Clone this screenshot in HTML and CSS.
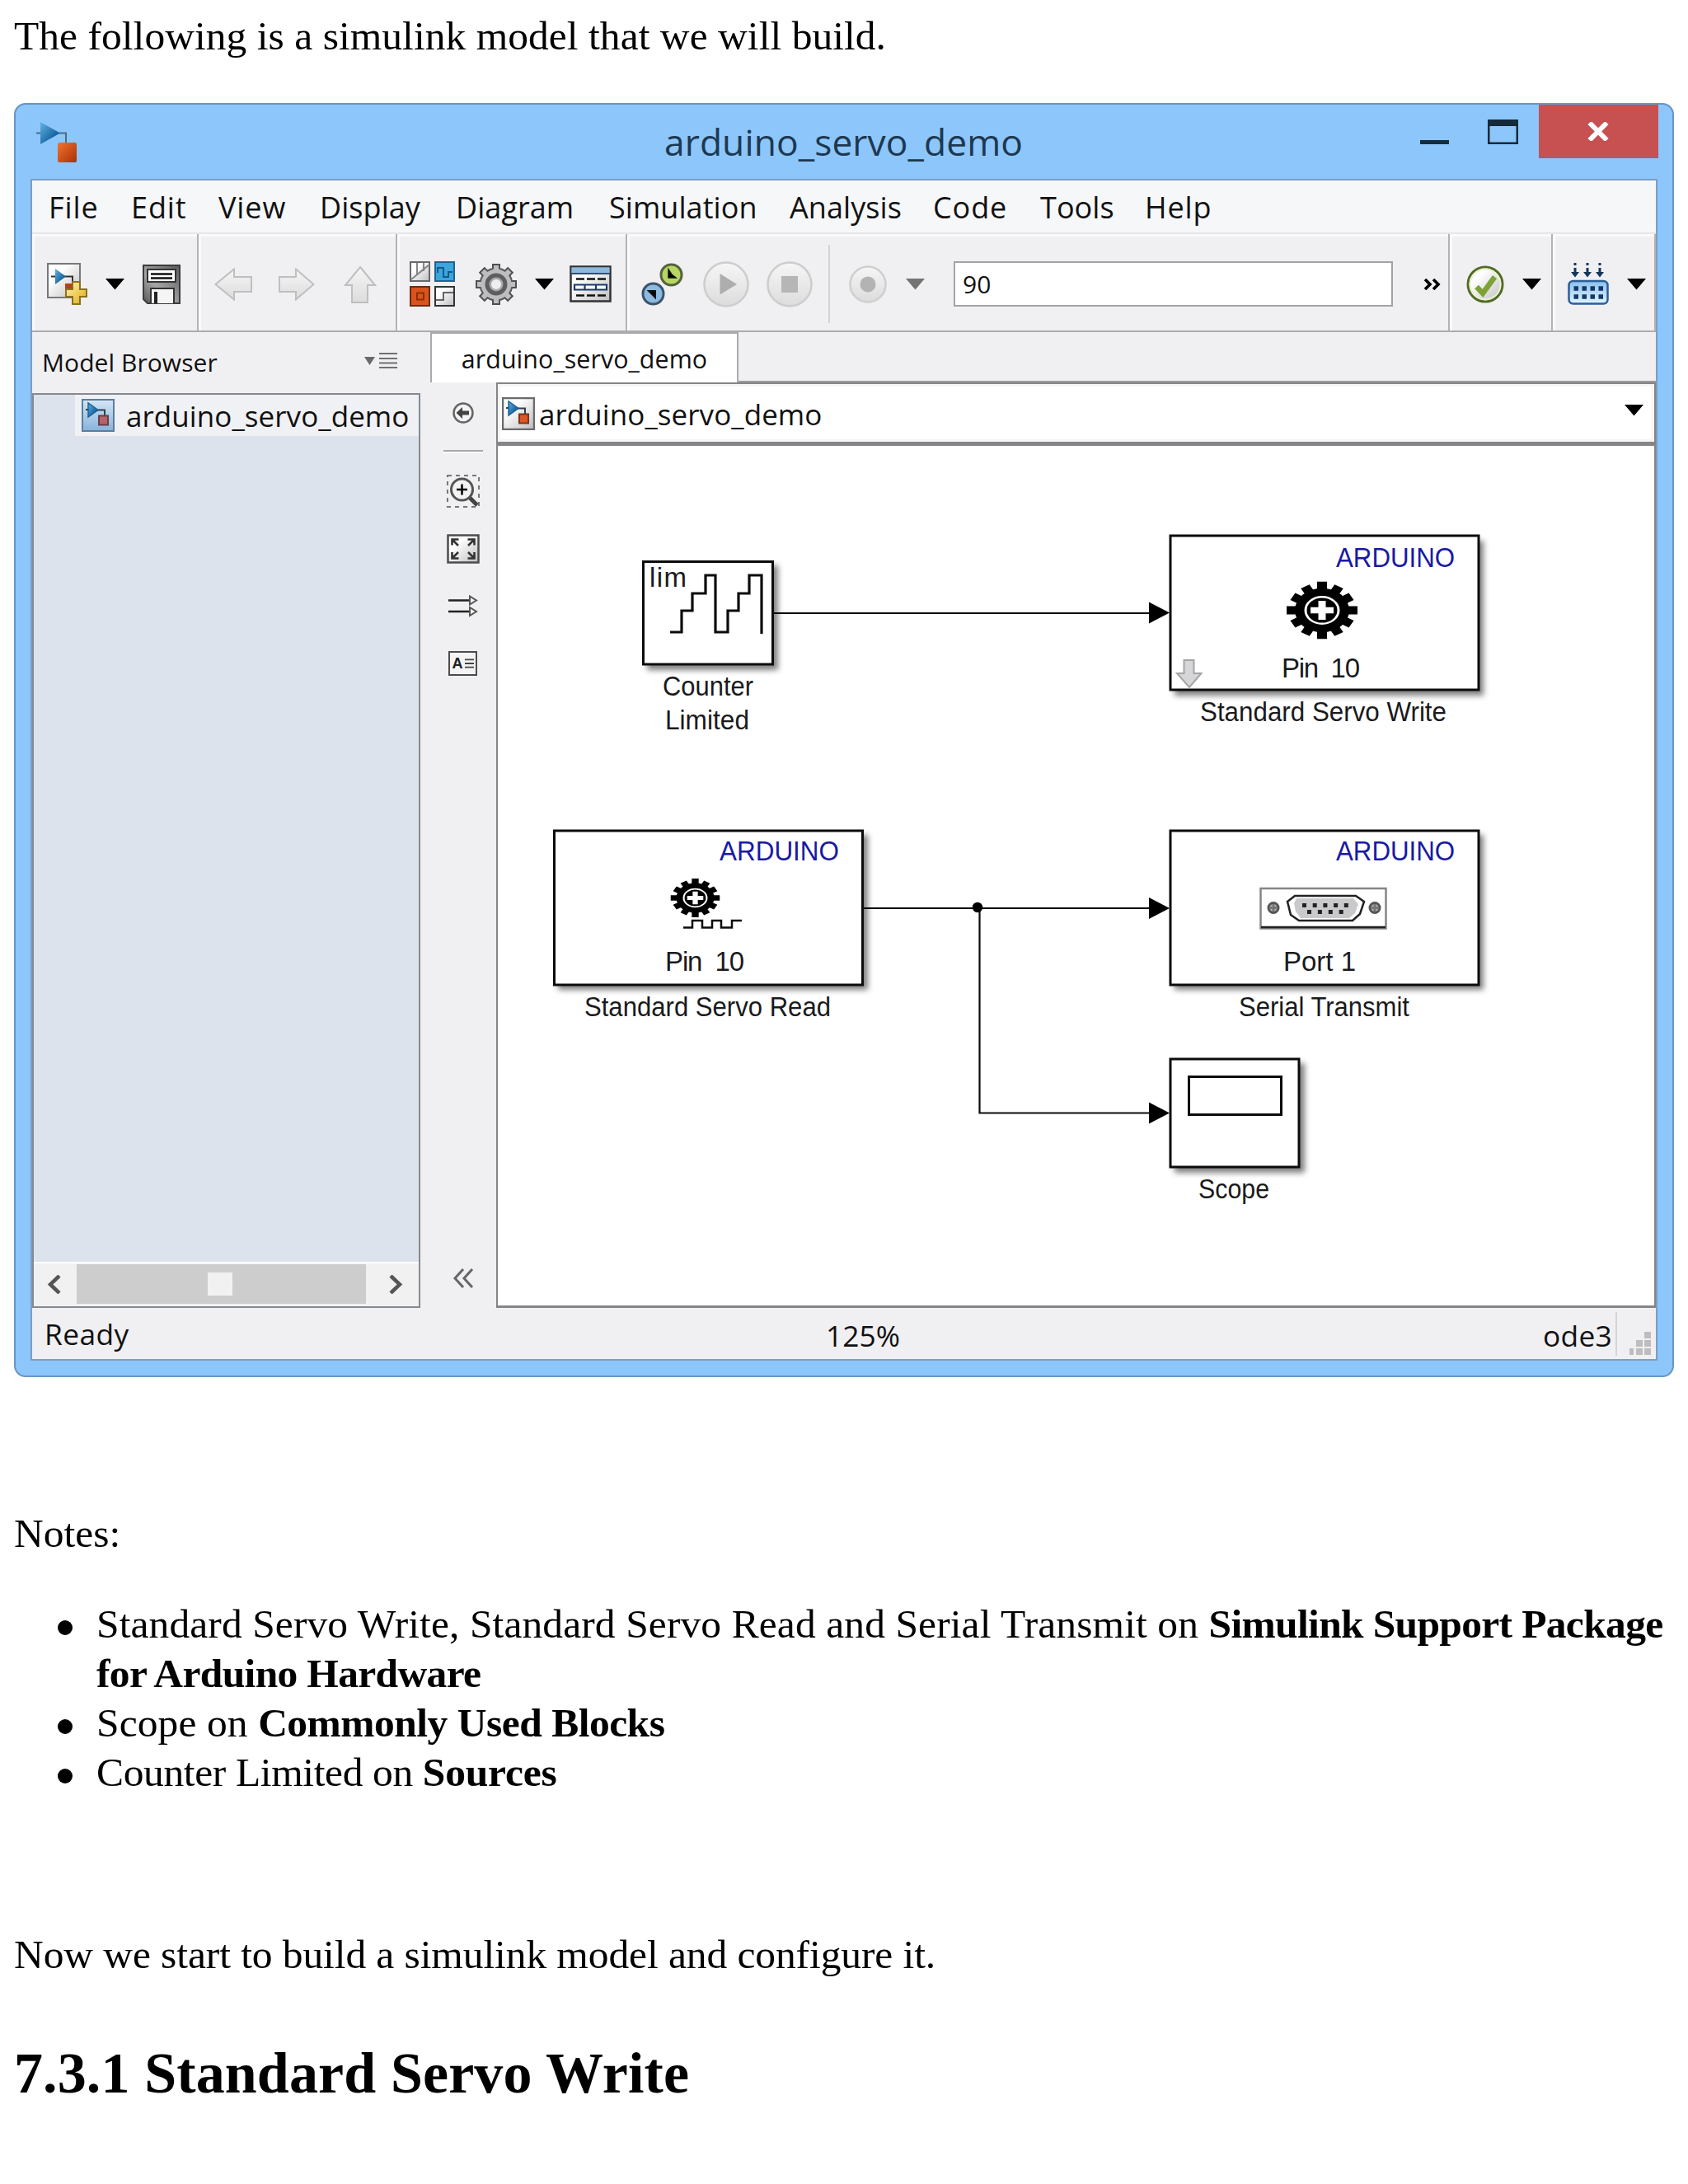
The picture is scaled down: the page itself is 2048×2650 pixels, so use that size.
FILE: index.html
```html
<!DOCTYPE html>
<html lang="en">
<head>
<meta charset="utf-8">
<title>7.3 Servo</title>
<link rel="stylesheet" href="styles.css">
</head>
<body>
<svg class="defs" width="0" height="0">
  <defs>
    <linearGradient id="blue" x1="0" y1="0" x2="1" y2="1"><stop offset="0" stop-color="#62b2e4"/><stop offset=".7" stop-color="#14639f"/></linearGradient>
    <linearGradient id="orange" x1="0" y1="0" x2="1" y2="1"><stop offset="0" stop-color="#f4732e"/><stop offset="1" stop-color="#a93008"/></linearGradient>
    <linearGradient id="paper" x1="0" y1="0" x2="1" y2="1"><stop offset=".3" stop-color="#fff"/><stop offset="1" stop-color="#bdbdc0"/></linearGradient>
    <linearGradient id="paperblue" x1="0" y1="0" x2="0" y2="1"><stop offset="0" stop-color="#d5e6f5"/><stop offset="1" stop-color="#86b3db"/></linearGradient>
    <linearGradient id="gold" x1="0" y1="0" x2="1" y2="1"><stop offset="0" stop-color="#fff6b0"/><stop offset="1" stop-color="#e0aa10"/></linearGradient>
    <linearGradient id="steel" x1="1" y1="0" x2="0" y2="1"><stop offset="0" stop-color="#5a5a5a"/><stop offset=".6" stop-color="#a6a6a6"/><stop offset="1" stop-color="#555"/></linearGradient>
    <linearGradient id="pale" x1="0" y1="0" x2="0" y2="1"><stop offset="0" stop-color="#f6f6f6"/><stop offset="1" stop-color="#dcdcdd"/></linearGradient>
    <linearGradient id="sky" x1="0" y1="0" x2="0" y2="1"><stop offset="0" stop-color="#8cc0ee"/><stop offset="1" stop-color="#e3f3ff"/></linearGradient>
    <filter id="shadow" x="-10%" y="-10%" width="125%" height="130%"><feGaussianBlur stdDeviation="3.5"/></filter>
    <symbol id="caret" viewBox="0 0 23 14"><path d="M0 0H23L11.500 13.500Z"/></symbol>
    <symbol id="model" viewBox="0 0 40 40"><path d="M5 13h4M19 13.500h9V20" fill="none" stroke="#333f4a" stroke-width="2"/><path d="M8 5V22L20 13.500Z" fill="url(#blue)" stroke="#1d6296" stroke-width="1.500"/></symbol>
  </defs>
</svg>

<p class="intro">The following is a simulink model that we will build.</p>

<div class="window">
  <header class="titlebar">
    <svg class="app-icon" viewBox="0 0 49 49"><path d="M0 13.500H6M28 13.500h8V25" fill="none" stroke="#4b6b86" stroke-width="2"/><path d="M5 0V27L29 13.500Z" fill="url(#blue)"/><rect x="26" y="25" width="23" height="24" rx="2" fill="url(#orange)"/></svg>
    <span class="title">arduino_servo_demo</span>
    <svg class="win-min" viewBox="0 0 35 5"><path d="M0 0H35V5H0Z" fill="#152c40"/></svg>
    <svg class="win-max" viewBox="0 0 37 30"><path d="M0 0H37V30H0ZM2.500 8V27.500H34.500V8Z" fill="#14293a" fill-rule="evenodd"/></svg>
    <div class="win-close"><svg viewBox="0 0 28 23"><path d="M3.500 1 24.500 22M24.500 1 3.500 22" stroke="#fff" stroke-width="6"/></svg></div>
  </header>

  <div class="client">
    <nav class="menu"><span class="wide">File</span><span class="wide">Edit</span><span class="wide">View</span><span>Display</span><span>Diagram</span><span>Simulation</span><span>Analysis</span><span class="wide">Code</span><span>Tools</span><span class="wide">Help</span></nav>

    <div class="toolbar">
      <div class="group g-file">
        <svg class="t-new" viewBox="0 0 49 51"><rect x="1" y="1" width="39" height="41" fill="url(#paper)" stroke="#77787b" stroke-width="2"/><path d="M5 16.500h6M20 16.500h11V24" fill="none" stroke="#333" stroke-width="2"/><path d="M10 7V26L23 16.500Z" fill="url(#blue)"/><rect x="22" y="25" width="10" height="8" fill="#b4401b"/><path d="M31 23h9v9h8v9h-8v9h-9v-9h-8v-9h8Z" fill="url(#gold)" stroke="#8b701d" stroke-width="2"/></svg>
        <svg class="caret"><use href="#caret"/></svg>
        <svg class="t-save" viewBox="0 0 46 48"><path d="M1 1H45V47H6L1 42Z" fill="url(#steel)" stroke="#3b3b3b" stroke-width="2"/><rect x="6" y="6" width="34" height="15" fill="#fff" stroke="#333" stroke-width="2"/><path d="M10 11.500h26M10 16.500h26" stroke="#111" stroke-width="2.500"/><path d="M10 47V29H38V47" fill="#f5f5f5" stroke="#333" stroke-width="2"/><path d="M16 33V47" stroke="#222" stroke-width="4"/></svg>
      </div>
      <div class="group g-nav">
        <svg class="t-back" viewBox="0 0 46 40"><path d="M1.500 20 24 1.500V11H45V29H24V38.500Z" fill="url(#pale)" stroke="#bfbfc1" stroke-width="2"/></svg>
        <svg class="t-fwd" viewBox="0 0 44 40"><path d="M42.500 20 21 1.500V11H1V29H21V38.500Z" fill="url(#pale)" stroke="#bfbfc1" stroke-width="2"/></svg>
        <svg class="t-up" viewBox="0 0 40 46"><path d="M20 2 38 24H29V45H10V24H2Z" fill="url(#pale)" stroke="#bfbfc1" stroke-width="2"/></svg>
      </div>
      <div class="group g-lib">
        <svg class="t-lib" viewBox="0 0 55 55"><g stroke-width="2"><rect x="1" y="1" width="23" height="23" fill="url(#paper)" stroke="#68696b"/><path d="M9 2V17M17 2V12M2 22 24 4" fill="none" stroke="#85868a"/><rect x="31" y="1" width="23" height="23" fill="#3ba5dc" stroke="#1f6390"/><path d="M34 14V8H41V19H47V13H52" fill="none" stroke="#135a86"/><rect x="1" y="31" width="23" height="23" fill="#d9541e" stroke="#6d2c12"/><rect x="9" y="38.500" width="8" height="8" fill="none" stroke="#8d2d08"/><rect x="31" y="31" width="23" height="23" fill="url(#paper)" stroke="#333"/><path d="M32 47H41V38H53" fill="none" stroke="#666"/></g></svg>
        <svg class="t-gear" viewBox="-25 -25 50 50"><g stroke="#4f4f50" stroke-width="10"><path d="M0-25V25M-25 0H25"/><path d="M0-25V25M-25 0H25" transform="rotate(45)"/></g><circle r="20.500" fill="#58585a"/><g stroke="#bebec0" stroke-width="6"><path d="M0-23V23M-23 0H23"/><path d="M0-23V23M-23 0H23" transform="rotate(45)"/></g><circle r="18.500" fill="#bdbdbf"/><circle r="11" fill="#aaa" stroke="#5e5e60" stroke-width="5"/><circle r="6" fill="#eee"/></svg>
        <svg class="caret"><use href="#caret"/></svg>
        <svg class="t-table" viewBox="0 0 51 45"><rect x="1.500" y="1.500" width="48" height="42" fill="url(#paper)" stroke="#333" stroke-width="2.500"/><rect x="2.500" y="2.500" width="46" height="7" fill="#8db9de"/><path d="M2 10H49" stroke="#35516d" stroke-width="2"/><path d="M8 16.500H44M8 36.500H44" stroke="#111" stroke-width="2.500" stroke-dasharray="10 3"/><path d="M6 23.500H45V29.500H6ZM18.500 23V30M32 23V30" fill="#fff" stroke="#1c3b6b" stroke-width="2.200"/></svg>
      </div>
      <div class="group g-sim">
        <svg class="t-clocks" viewBox="0 0 51 52"><circle cx="36.500" cy="14.500" r="12.500" fill="#b7d765" stroke="#55633a" stroke-width="3"/><path d="M33 8V18H42L37 14Z" stroke="#111" stroke-width="1.500"/><circle cx="14.500" cy="37.500" r="12.500" fill="#8dbbe0" stroke="#3c536b" stroke-width="3"/><path d="M9 34H17V42Z" stroke="#111" stroke-width="2"/></svg>
        <svg class="t-play" viewBox="0 0 56 56"><circle cx="28" cy="28" r="26.500" fill="url(#pale)" stroke="#cdcdce" stroke-width="2.500"/><path d="M20.500 15V40.500L41 28Z" fill="#adadae"/></svg>
        <svg class="t-stop" viewBox="0 0 56 56"><circle cx="28" cy="28" r="26.500" fill="url(#pale)" stroke="#cdcdce" stroke-width="2.500"/><rect x="18" y="18" width="20" height="20" fill="#b6b6b7"/></svg>
        <i class="rule"></i>
        <svg class="t-rec" viewBox="0 0 46 46"><circle cx="23" cy="23" r="21.500" fill="url(#pale)" stroke="#cfcfd0" stroke-width="2.500"/><circle cx="23" cy="23" r="9.500" fill="#b3b3b4"/></svg>
        <svg class="caret dim"><use href="#caret"/></svg>
        <div class="stop-time">90</div>
        <svg class="t-more" viewBox="0 0 22 14"><path d="M2 1 8 7 2 13M12 1 18 7 12 13" fill="none" stroke="#000" stroke-width="3.600"/></svg>
      </div>
      <div class="group g-check">
        <svg class="t-check" viewBox="0 0 46 46"><circle cx="23" cy="23" r="21" fill="url(#paper)" stroke="#526b26" stroke-width="3"/><circle cx="23" cy="23" r="18.500" fill="none" stroke="#e7f2cd" stroke-width="2"/><path d="M12.500 26 20 34 34.500 14" fill="none" stroke="#7fa236" stroke-width="6.500"/></svg>
        <svg class="caret"><use href="#caret"/></svg>
      </div>
      <div class="group g-build">
        <svg class="t-build" viewBox="0 0 50 51"><g stroke="#16365a" fill="#16365a"><path d="M9 0V3M24 0V3M39 0V3M9 6V13M24 6V13M39 6V13" stroke-width="3"/><path d="M4 11H14L9 17.500ZM19 11H29L24 17.500ZM34 11H44L39 17.500Z" stroke="none"/></g><rect x="1.500" y="22" width="47" height="27.500" rx="5" fill="url(#sky)" stroke="#2b5f96" stroke-width="2.500"/><path d="M7.500 31H44M7.500 41H44" stroke="#123a66" stroke-width="5.500" stroke-dasharray="5.500 4.500"/></svg>
        <svg class="caret"><use href="#caret"/></svg>
      </div>
    </div>

    <div class="main">
      <aside class="browser">
        <div class="browser-head"><span>Model Browser</span>
          <svg viewBox="0 0 40 19"><path d="M0 5H13L6.500 15Z" fill="#6a6a6a"/><path d="M18 1H40M18 7H40M18 12.500H40M18 18H40" stroke="#707070" stroke-width="2"/></svg>
        </div>
        <div class="tree">
          <div class="tree-row"><svg viewBox="0 0 40 40"><rect x="1" y="1" width="38" height="38" fill="url(#paperblue)" stroke="#5d7d9e" stroke-width="2"/><use href="#model"/><rect x="21" y="20.500" width="11" height="11" fill="#b5636a" stroke="#6d3c49" stroke-width="2"/></svg><span>arduino_servo_demo</span></div>
          <div class="hscroll">
            <svg class="h-left" viewBox="0 0 19 23"><path d="M16 1 5 11.500 16 22" fill="none" stroke="#555" stroke-width="4.500"/></svg>
            <div class="track"><i></i></div>
            <svg class="h-right" viewBox="0 0 19 23"><path d="M3 1 14 11.500 3 22" fill="none" stroke="#555" stroke-width="4.500"/></svg>
          </div>
        </div>
      </aside>

      <section class="work">
        <div class="tabs"><div class="tab">arduino_servo_demo</div><div class="tab-rest"></div></div>
        <div class="edit-row">
          <div class="palette">
            <svg class="p-hide" viewBox="0 0 26 26"><circle cx="13" cy="13" r="11.500" fill="#f4f4f4" stroke="#666" stroke-width="2.500"/><path d="M4.500 13 12 6V10.500H20V15.500H12V20Z" fill="#444"/></svg>
            <i class="p-rule"></i>
            <svg class="p-zoom" viewBox="0 0 40 40"><rect x="1" y="1" width="38" height="38" fill="none" stroke="#777" stroke-width="2" stroke-dasharray="5 5"/><path d="M27 27 37 37" stroke="#444" stroke-width="5"/><circle cx="18.500" cy="18" r="13" fill="#f3f3f4" stroke="#555" stroke-width="3"/><path d="M12 18H25M18.500 11.500V24.500" stroke="#000" stroke-width="2.500"/></svg>
            <svg class="p-fit" viewBox="0 0 40 36"><rect x="1.500" y="1.500" width="37" height="33" fill="url(#paper)" stroke="#4c4c4e" stroke-width="2.500"/><path d="M6.500 13.500V6.500H14.500M7 7 14 14M25.500 6.500H33.500V13.500M33 7 26 14M6.500 22V29.500H14.500M7 29 14 22M33.500 22V29.500H25.500M33 29 26 22" fill="none" stroke="#333" stroke-width="2.600"/></svg>
            <svg class="p-sig" viewBox="0 0 36 27"><path d="M0 6.500H27M0 20H27" stroke="#222" stroke-width="2.500"/><path d="M26 1.500V11.500L34 6.500ZM26 15V25L34 20Z" fill="#f0f0f0" stroke="#555" stroke-width="2"/></svg>
            <div class="p-note"><b>A</b><svg viewBox="0 0 12 14"><path d="M0 2H12M0 7H12M0 12H12" stroke="#444" stroke-width="2"/></svg></div>
            <svg class="p-collapse" viewBox="0 0 26 24"><path d="M13 1 3 12 13 23M24 1 14 12 24 23" fill="none" stroke="#666" stroke-width="3"/></svg>
          </div>
          <div class="editor">
            <div class="address">
              <svg class="doc" viewBox="0 0 40 40"><rect x="1" y="1" width="38" height="38" fill="url(#paper)" stroke="#6b6b6d" stroke-width="2.500"/><use href="#model"/><rect x="21" y="20.500" width="11" height="11" fill="#dc5724" stroke="#7b3517" stroke-width="2"/></svg>
              <span>arduino_servo_demo</span>
              <svg class="caret"><use href="#caret"/></svg>
            </div>
            <svg class="canvas" viewBox="604 541 1403 1043">
              <g fill="#000" opacity=".5" filter="url(#shadow)">
                <rect x="785" y="686" width="159" height="127"/><rect x="1425" y="656" width="375" height="188"/><rect x="677" y="1013" width="376" height="188"/><rect x="1425" y="1013" width="375" height="188"/><rect x="1425" y="1290" width="158" height="133"/>
              </g>
              <g fill="#fff" stroke="#0c0c0c" stroke-width="3">
                <rect x="780.500" y="681.500" width="157" height="124.500"/><rect x="1420" y="650" width="374" height="187"/><rect x="672.500" y="1008" width="374" height="187"/><rect x="1420" y="1008" width="374" height="187"/><rect x="1420" y="1285" width="156" height="131"/><rect x="1442.500" y="1306.500" width="112" height="46"/>
              </g>
              <g fill="none" stroke="#0c0c0c" stroke-width="2.200">
                <path d="M939 744H1396M1048 1102H1396M1188.500 1102V1350.500H1396"/>
                <path d="M813 767H827V741H840V720H856V698H868V767H883V741H896V720H909V698H924V769" stroke-width="3.200"/>
                <path d="M829 1125.500H840V1117H852V1125.500H864V1117H875V1125.500H888V1117H900" stroke-width="2.500"/>
              </g>
              <path d="M1394 730.500V756.500L1419 743.500ZM1394 1089V1115L1419 1102ZM1394 1337.500V1363.500L1419 1350.500Z"/>
              <circle cx="1186" cy="1101" r="6.200"/>
              <svg x="1561" y="705.500" width="86" height="70" viewBox="-43 -43 86 86" preserveAspectRatio="none"><g stroke="#000" stroke-width="12"><path d="M0-43V43M-43 0H43"/><path d="M0-41V41M-41 0H41" transform="rotate(30)"/><path d="M0-41V41M-41 0H41" transform="rotate(60)"/></g><circle r="33"/><circle r="20" fill="none" stroke="#fff" stroke-width="3"/><path d="M-14 0H14M0-14V14" stroke="#fff" stroke-width="9"/></svg>
              <svg x="813.500" y="1066" width="60" height="47" viewBox="-43 -43 86 86" preserveAspectRatio="none"><g stroke="#000" stroke-width="12"><path d="M0-43V43M-43 0H43"/><path d="M0-41V41M-41 0H41" transform="rotate(30)"/><path d="M0-41V41M-41 0H41" transform="rotate(60)"/></g><circle r="33"/><circle r="20" fill="none" stroke="#fff" stroke-width="3"/><path d="M-14 0H14M0-14V14" stroke="#fff" stroke-width="9"/></svg>
              <path d="M1436.500 801H1448.500V817H1457.500L1443 834 1428 817H1436.500Z" fill="#d6d6d8" stroke="#a5a5a7" stroke-width="2"/>
              <g>
                <rect x="1529.500" y="1078" width="152" height="48.500" fill="#fff" stroke="#858587" stroke-width="2.500"/><path d="M1530 1125H1681" stroke="#222" stroke-width="2.500"/>
                <path d="M1571 1087H1645L1655 1094 1650 1109 1641 1117H1576L1566 1110 1562 1094Z" fill="#fff" stroke="#222" stroke-width="2.500"/>
                <path d="M1573 1090H1642L1648 1097 1644 1108 1637 1114H1578L1572 1106 1570 1096Z" fill="#c9c9cb"/>
                <path d="M1580 1098.500H1637" stroke="#222" stroke-width="5" stroke-dasharray="5 7.700"/><path d="M1586 1106.500H1632" stroke="#222" stroke-width="5" stroke-dasharray="5 7.900"/>
                <g fill="#b5b5b7" stroke="#555" stroke-width="3"><circle cx="1545" cy="1101.500" r="6"/><circle cx="1668" cy="1101.500" r="6"/></g>
                <path d="M1540 1101.500H1550M1545 1097V1106M1663 1101.500H1673M1668 1097V1106" stroke="#777" stroke-width="3"/>
              </g>
              <g class="lbl">
                <text x="788" y="712" textLength="45">lim</text>
                <text x="804" y="844" textLength="110" lengthAdjust="spacingAndGlyphs">Counter</text><text x="807" y="885" textLength="102" lengthAdjust="spacingAndGlyphs">Limited</text>
                <text x="1555" y="822" textLength="95" xml:space="preserve">Pin  10</text><text x="1456" y="875" textLength="299" lengthAdjust="spacingAndGlyphs">Standard Servo Write</text>
                <text x="807" y="1178" textLength="96" xml:space="preserve">Pin  10</text><text x="709" y="1233" textLength="299" lengthAdjust="spacingAndGlyphs">Standard Servo Read</text>
                <text x="1557" y="1178" textLength="88">Port 1</text><text x="1503" y="1233" textLength="207" lengthAdjust="spacingAndGlyphs">Serial Transmit</text>
                <text x="1454" y="1454" textLength="86" lengthAdjust="spacingAndGlyphs">Scope</text>
              </g>
              <g class="brand">
                <text x="1621" y="688" textLength="144" lengthAdjust="spacingAndGlyphs">ARDUINO</text><text x="873" y="1044" textLength="145" lengthAdjust="spacingAndGlyphs">ARDUINO</text><text x="1621" y="1044" textLength="144" lengthAdjust="spacingAndGlyphs">ARDUINO</text>
              </g>
            </svg>
          </div>
        </div>
      </section>
    </div>

    <footer class="status">
      <span class="s-ready">Ready</span><span class="s-zoom">125%</span><span class="s-solver">ode3</span>
      <svg viewBox="0 0 26 28"><path d="M18 0h8v8h-8zM8 10h8v8H8zM18 10h8v8h-8zM0 20h5v8H0zM8 20h8v8H8zM18 20h8v8h-8z" fill="#bdbdbe"/></svg>
    </footer>
  </div>
</div>

<p class="notes">Notes:</p>
<ul>
  <li class="l1">Standard Servo Write, Standard Servo Read and Serial Transmit on <b>Simulink Support Package<br>for Arduino Hardware</b></li>
  <li class="l2">Scope on <b>Commonly Used Blocks</b></li>
  <li class="l3">Counter Limited on <b>Sources</b></li>
</ul>
<p class="now">Now we start to build a simulink model and configure it.</p>
<h2>7.3.1 Standard Servo Write</h2>
</body>
</html>
```
FILE: styles.css
```css
* { box-sizing: border-box; }
body { margin: 0; padding: 14px 17px 0; width: 2048px; height: 2650px; overflow: hidden; background: #fff; color: #000; font: 49.5px/60px "Liberation Serif", serif; }
svg { display: block; flex: none; }
.defs { height: 0; }
p, ul, h2 { margin: 0; white-space: nowrap; }

.intro { margin-bottom: 51px; letter-spacing: .04px; }
.notes { margin-top: 160px; }
ul { margin-top: 50px; padding-left: 100px; list-style: none; }
li { position: relative; }
li::before { content: ""; position: absolute; left: -47px; top: 25px; width: 18px; height: 18px; border-radius: 50%; background: #000; }
.l1 { letter-spacing: .1px; }
.l1 b { letter-spacing: -.65px; }
.l2 { letter-spacing: .1px; }
.l2 b { letter-spacing: -.5px; }
.l3 { letter-spacing: -.37px; }
.l3 b { letter-spacing: -.2px; }
.now { margin-top: 161px; letter-spacing: -.09px; }
h2 { margin-top: 72px; font-size: 70px; line-height: 84px; letter-spacing: .12px; }

.window { width: 2014px; height: 1546px; border: 2px solid #6796c3; border-radius: 14px; background: #8cc6fb; padding: 0 18px 18px; font-family: "Open Sans", sans-serif; font-size: 35px; color: #111; letter-spacing: .06px; }
.titlebar { height: 90px; display: flex; align-items: flex-start; }
.app-icon { width: 49px; height: 49px; margin: 21px 0 0 7px; }
.title { width: 434px; margin: 15px 0 0 713px; font-size: 44.3px; color: #1d3850; letter-spacing: .1px; white-space: nowrap; }
.win-min { width: 35px; height: 5px; margin: 43px 0 0 483px; }
.win-max { width: 37px; height: 30px; margin: 18px 0 0 47px; }
.win-close { width: 145px; height: 65px; margin: 0 -1px 0 25px; padding: 21px 2px 0 0; background: #c75050; border-bottom: 2px solid #8d6688; display: flex; justify-content: center; }
.win-close svg { width: 28px; height: 23px; }

.client { height: 1434px; border: 2px solid #7d9fc2; background: #f0eff1; }
.menu { height: 65px; padding: 2px 0 0 20px; display: grid; grid-template-columns: 100px 106px 123px 165px 186px 219px 174px 130px 127px 100px; align-items: center; background: #f5f7f9; border-bottom: 2px solid #e6e6e8; font-size: 36px; }
.menu .wide { letter-spacing: .9px; }

.toolbar { height: 119px; display: flex; border-bottom: 2px solid #acacae; }
.group { display: flex; align-items: center; padding-top: 4px; border-right: 2px solid #b3b3b5; box-shadow: inset 3px 3px 0 #fafafa; }
.g-file { width: 202px; } .g-nav { width: 241px; } .g-lib { width: 279px; } .g-sim { width: 998px; } .g-check { width: 125px; } .g-build { width: 125px; }
.caret { width: 23px; height: 14px; margin-left: 22px; fill: #000; }
.caret.dim { fill: #747474; margin-left: 23px; }
.t-new { width: 49px; height: 51px; margin-left: 18px; }
.t-save { width: 46px; height: 48px; margin-left: 22px; }
.t-back { width: 46px; height: 40px; margin-left: 19px; }
.t-fwd { width: 44px; height: 40px; margin-left: 32px; }
.t-up { width: 40px; height: 46px; margin-left: 35px; }
.t-lib { width: 55px; height: 55px; margin-left: 15px; }
.t-gear { width: 50px; height: 50px; margin-left: 25px; }
.t-table { width: 51px; height: 45px; margin-left: 19px; }
.t-clocks { width: 51px; height: 52px; margin-left: 17px; }
.t-play { width: 56px; height: 56px; margin-left: 24px; }
.t-stop { width: 56px; height: 56px; margin-left: 21px; }
.rule { width: 2px; height: 95px; margin-left: 19px; background: #d3d3d5; }
.t-rec { width: 46px; height: 46px; margin-left: 23px; }
.stop-time { width: 533px; height: 55px; margin-left: 35px; border: 2px solid #a3a3a5; background: #fff; padding-left: 9px; font-size: 30px; line-height: 52px; }
.t-more { width: 22px; height: 14px; margin-left: 37px; }
.t-check { width: 46px; height: 46px; margin-left: 20px; }
.t-build { width: 50px; height: 51px; margin-left: 18px; }

.main { height: 1184px; display: flex; }
.browser { width: 471px; }
.browser-head { height: 74px; padding: 0 28px 0 12px; display: flex; align-items: center; justify-content: space-between; font-size: 30px; }
.browser-head svg { width: 40px; height: 19px; margin-top: -5px; }
.tree { height: 1110px; border: 2px solid #858a91; background: #dce3ed; display: flex; flex-direction: column; justify-content: space-between; }
.tree-row { height: 50px; margin-left: 50px; padding: 1px 0 0 8px; display: flex; align-items: center; gap: 14px; background: #f0f1f4; }
.tree-row svg, .doc { width: 40px; height: 40px; }
.tree-row svg { margin-top: -2px; }
.hscroll { height: 54px; border-top: 2px solid #fff; padding-bottom: 2px; background: #f1f1f1; display: flex; align-items: center; }
.h-left, .h-right { width: 19px; height: 23px; }
.h-left { margin-left: 15px; }
.track { width: 351px; height: 48px; margin: 0 27px 0 18px; background: #cdcdcd; display: flex; align-items: center; justify-content: center; }
.track i { width: 30px; height: 28px; margin-right: 3px; background: #f1f1f1; }

.work { width: 1499px; }
.tabs { height: 61px; padding-left: 12px; display: flex; }
.tab { width: 374px; border: 2px solid #aaaaac; border-width: 2px 2px 0; background: #fff; font-size: 30.4px; line-height: 61px; text-align: center; }
.tab-rest { flex: 1; border-bottom: 2px solid #9a9a9c; }
.edit-row { height: 1123px; display: flex; }
.palette { width: 92px; display: flex; flex-direction: column; align-items: center; padding: 24px 0 24px 11px; }
.p-hide { width: 26px; height: 26px; }
.p-rule { width: 48px; height: 4px; margin-top: 32px; background: #a7a7a9; border-bottom: 2px solid #fff; }
.p-zoom { width: 40px; height: 40px; margin-top: 26px; }
.p-fit { width: 40px; height: 36px; margin-top: 32px; }
.p-sig { width: 36px; height: 27px; margin-top: 38px; }
.p-note { width: 35px; height: 30px; margin-top: 41px; border: 2px solid #4c4c4e; background: #f4f4f5; display: flex; align-items: center; justify-content: center; gap: 2px; font: 18px/26px "Liberation Sans", sans-serif; color: #222; }
.p-note svg { width: 11px; height: 14px; }
.p-collapse { width: 26px; height: 24px; margin-top: auto; }
.editor { width: 1407px; border: 2px solid #858587; border-bottom-width: 3px; background: #fff; }
.address { height: 75px; padding: 1px 13px 0 5px; border-bottom: 5px solid #858587; box-shadow: inset 0 0 0 3px #f5f5f6; display: flex; align-items: center; }
.address span { margin: 3px 0 0 5px; }
.address .caret { margin: -7px 0 0 auto; }
.canvas { width: 1403px; height: 1043px; }
.lbl { font: 33px "Liberation Sans", sans-serif; fill: #1a1a1c; letter-spacing: 0; }
.brand { font: 33.5px "Liberation Sans", sans-serif; fill: #1a1aa4; letter-spacing: 0; }

.status { height: 62px; display: flex; align-items: center; padding-left: 15px; font-size: 35.3px; }
.s-ready { width: 948px; letter-spacing: .4px; }
.s-zoom { width: 870px; padding-top: 3px; }
.s-solver { width: 90px; height: 53px; border-right: 2px solid #d5d5d7; line-height: 56px; letter-spacing: .3px; white-space: nowrap; }
.status svg { width: 26px; height: 28px; margin: 24px 0 0 15px; }
```
